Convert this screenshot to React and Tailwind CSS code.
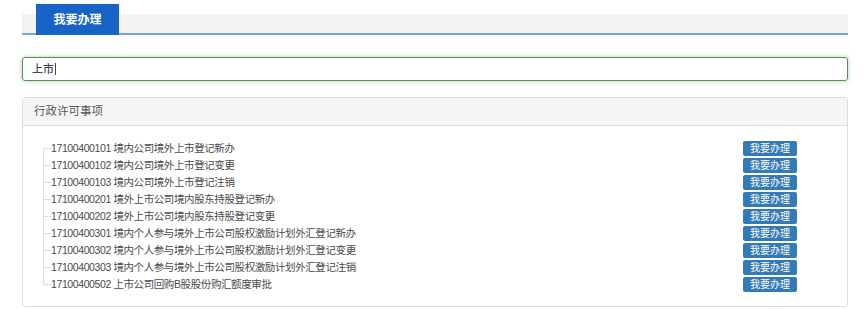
import React from 'react';

const items = [
  { code: '17100400101', name: '境内公司境外上市登记新办' },
  { code: '17100400102', name: '境内公司境外上市登记变更' },
  { code: '17100400103', name: '境内公司境外上市登记注销' },
  { code: '17100400201', name: '境外上市公司境内股东持股登记新办' },
  { code: '17100400202', name: '境外上市公司境内股东持股登记变更' },
  { code: '17100400301', name: '境内个人参与境外上市公司股权激励计划外汇登记新办' },
  { code: '17100400302', name: '境内个人参与境外上市公司股权激励计划外汇登记变更' },
  { code: '17100400303', name: '境内个人参与境外上市公司股权激励计划外汇登记注销' },
  { code: '17100400502', name: '上市公司回购B股股份购汇额度审批' },
];

const font = { fontFamily: '"Liberation Sans", "Noto Sans CJK SC", sans-serif' };

const App = () => {
  return (
    <div className="w-[865px] h-[309px] bg-white pl-[22px] pr-[17px] overflow-hidden" style={font}>
      {/* Tabs */}
      <div className="mt-[14px] h-[21px] bg-[#f3f3f3] border-b-2 border-[#7ba3dd] pl-[14px] flex items-end">
        <div className="h-[31px] w-[83px] bg-[#1763c6] text-white text-[12px] font-bold flex items-center justify-center -mb-[2px]">
          我要办理
        </div>
      </div>

      {/* Search input */}
      <div className="mt-[22px] h-[24px] border border-[#5e8a5e] rounded-[3px] shadow-[0_0_4px_rgba(60,160,60,0.45)] flex items-center pl-[9px] text-[11px] font-medium text-[#444]">
        上市<span className="w-px h-[12px] bg-[#444] ml-px"></span>
      </div>

      {/* Panel */}
      <div className="mt-[16px] border border-[#dddddd] rounded-[3px]">
        <div className="h-[28px] bg-[#f5f5f5] border-b border-[#dddddd] flex items-center pl-[11px] text-[11.5px] text-[#555]">
          行政许可事项
        </div>
        <div className="pt-[14px] pb-[13px] pl-[20px] pr-[50px]">
          {items.map((item, i) => (
            <div key={item.code} className="h-[17px] flex items-center">
              <div className="w-[8px] h-[17px] flex flex-col">
                <div className={i === 0 ? 'h-[9px] border-b border-[#dcdcdc]' : 'h-[9px] border-l border-b border-[#dcdcdc]'}></div>
                <div className={i === items.length - 1 ? 'h-[8px]' : 'h-[8px] border-l border-[#dcdcdc]'}></div>
              </div>
              <div className="flex-1 text-[10.5px] tracking-[-0.4px] text-[#4a4a4a] whitespace-nowrap">
                {item.code} {item.name}
              </div>
              <button className="h-[15px] w-[54px] bg-[#337ab7] rounded-[2px] text-white text-[10px] flex items-center justify-center leading-none">
                我要办理
              </button>
            </div>
          ))}
        </div>
      </div>
    </div>
  );
};

export default App;
